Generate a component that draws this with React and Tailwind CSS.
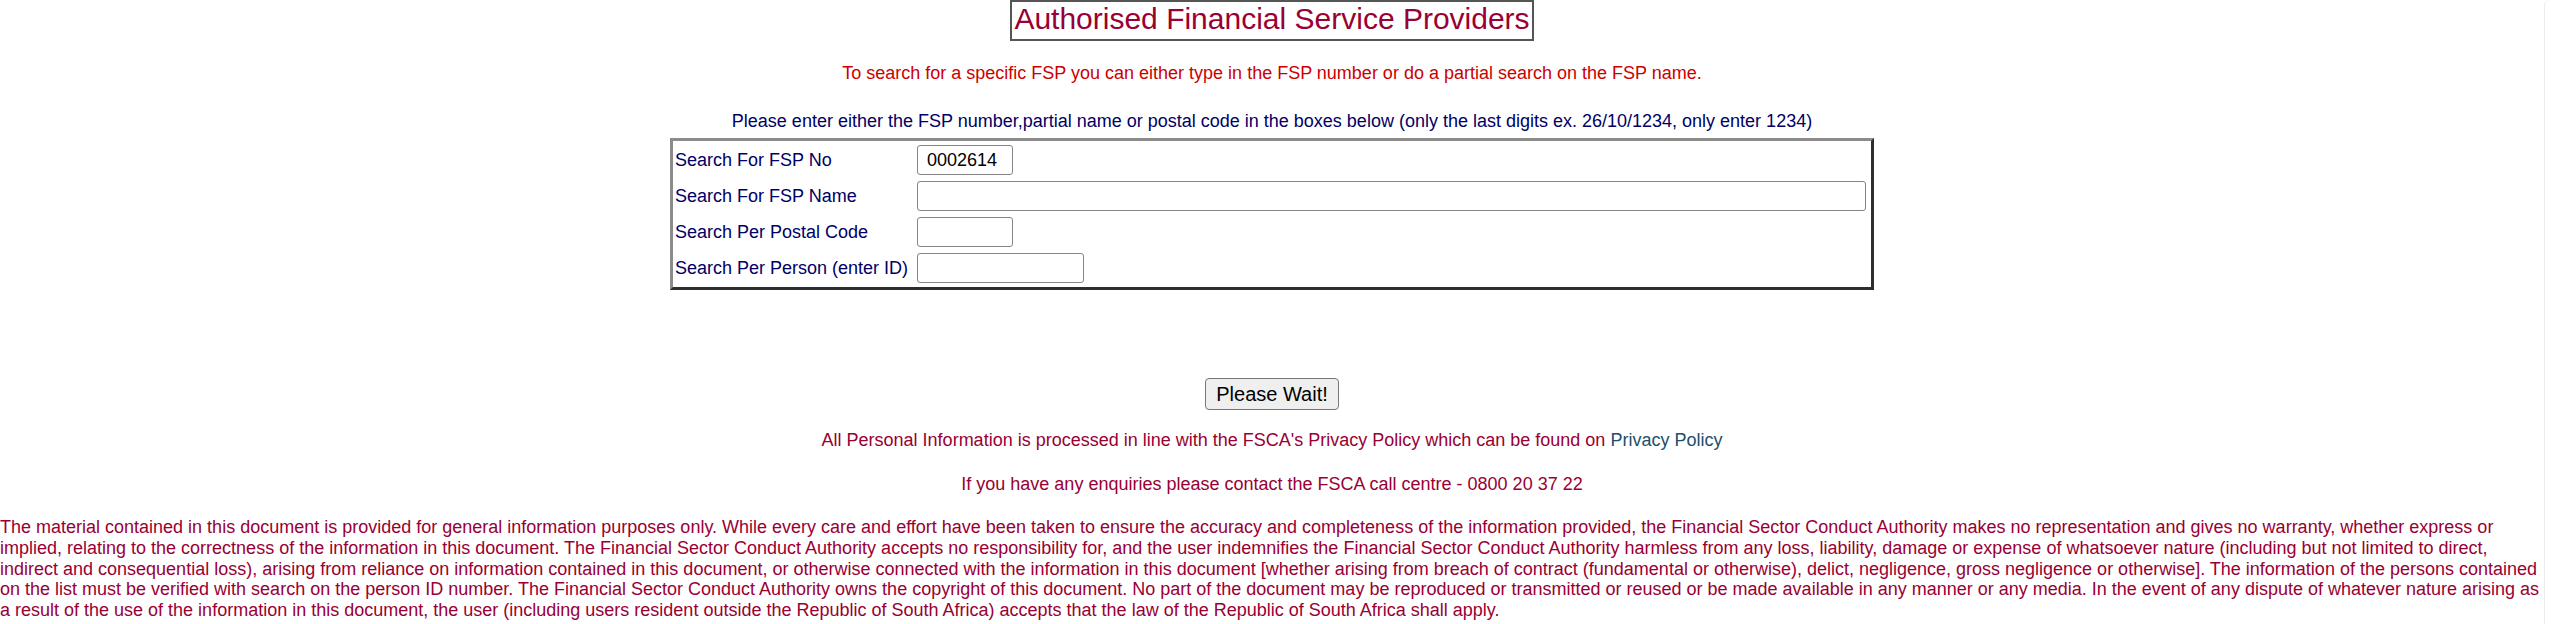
import React from "react";

const SEARCH_ROWS = [
  { label: "Search For FSP No", width: "w-[96px]", value: "0002614" },
  { label: "Search For FSP Name", width: "w-[949px]", value: "" },
  { label: "Search Per Postal Code", width: "w-[96px]", value: "" },
  { label: "Search Per Person (enter ID)", width: "w-[167px]", value: "" },
];

const DISCLAIMER = [
  "The material contained in this document is provided for general information purposes only. While every care and effort have been taken to ensure the accuracy and completeness of the information provided, the Financial Sector Conduct Authority makes no representation and gives no warranty, whether express or",
  "implied, relating to the correctness of the information in this document. The Financial Sector Conduct Authority accepts no responsibility for, and the user indemnifies the Financial Sector Conduct Authority harmless from any loss, liability, damage or expense of whatsoever nature (including but not limited to direct,",
  "indirect and consequential loss), arising from reliance on information contained in this document, or otherwise connected with the information in this document [whether arising from breach of contract (fundamental or otherwise), delict, negligence, gross negligence or otherwise]. The information of the persons contained",
  "on the list must be verified with search on the person ID number. The Financial Sector Conduct Authority owns the copyright of this document. No part of the document may be reproduced or transmitted or reused or be made available in any manner or any media. In the event of any dispute of whatever nature arising as",
  "a result of the use of the information in this document, the user (including users resident outside the Republic of South Africa) accepts that the law of the Republic of South Africa shall apply.",
];

export default function App() {
  return (
    <div className="flex min-h-screen bg-white font-['Liberation_Sans',Arial,sans-serif] text-[18px] leading-[21px]">
      <div className="flex min-w-0 flex-1 flex-col items-center">
        {/* heading */}
        <div className="border-2 border-[#555555] px-[2px] pb-[4px] text-[30px] leading-[33px] text-[#990033]">
          Authorised Financial Service Providers
        </div>

        <p className="mt-[22px] text-[#cc0000]">
          To search for a specific FSP you can either type in the FSP number or do a partial search on the FSP name.
        </p>

        <p className="mt-[27px] text-[#000066]">
          Please enter either the FSP number,partial name or postal code in the boxes below (only the last digits ex. 26/10/1234, only enter 1234)
        </p>

        {/* search table */}
        <div className="mt-[6px] flex w-[1204px] flex-col gap-[6px] border-[3px] border-t-[#8c8c8c] border-l-[#8c8c8c] border-r-[#2e2e2e] border-b-[#2e2e2e] py-[4px] pl-[2px]">
          {SEARCH_ROWS.map((row) => (
            <div key={row.label} className="flex h-[30px] items-center">
              <span className="w-[242px] shrink-0 text-[#000066]">{row.label}</span>
              <input
                type="text"
                readOnly
                value={row.value}
                className={`${row.width} h-[30px] rounded-[3px] border border-[#858585] bg-white pl-[9px] text-[18px] text-black outline-none`}
              />
            </div>
          ))}
        </div>

        <button
          type="button"
          className="mt-[88px] h-[32px] w-[134px] rounded-[4px] border-[1.5px] border-[#767676] bg-[#efefef] text-[20px] leading-[23px] text-black"
        >
          Please Wait!
        </button>

        <p className="mt-[20px] text-[#990033]">
          All Personal Information is processed in line with the FSCA's Privacy Policy which can be found on{" "}
          <a href="#" className="text-[#1d4e6b]">Privacy Policy</a>
        </p>

        <p className="mt-[23px] text-[#990033]">
          If you have any enquiries please contact the FSCA call centre - 0800 20 37 22
        </p>

        <p className="mt-[22px] self-stretch text-left leading-[20.75px] text-[#990033]">
          {DISCLAIMER.map((line, i) => (
            <React.Fragment key={i}>
              {line}
              {i < DISCLAIMER.length - 1 && <br />}
            </React.Fragment>
          ))}
        </p>
      </div>
      <div className="w-[7px] shrink-0 rounded-tl-[5px] border-l border-[#ececec]" />
    </div>
  );
}
